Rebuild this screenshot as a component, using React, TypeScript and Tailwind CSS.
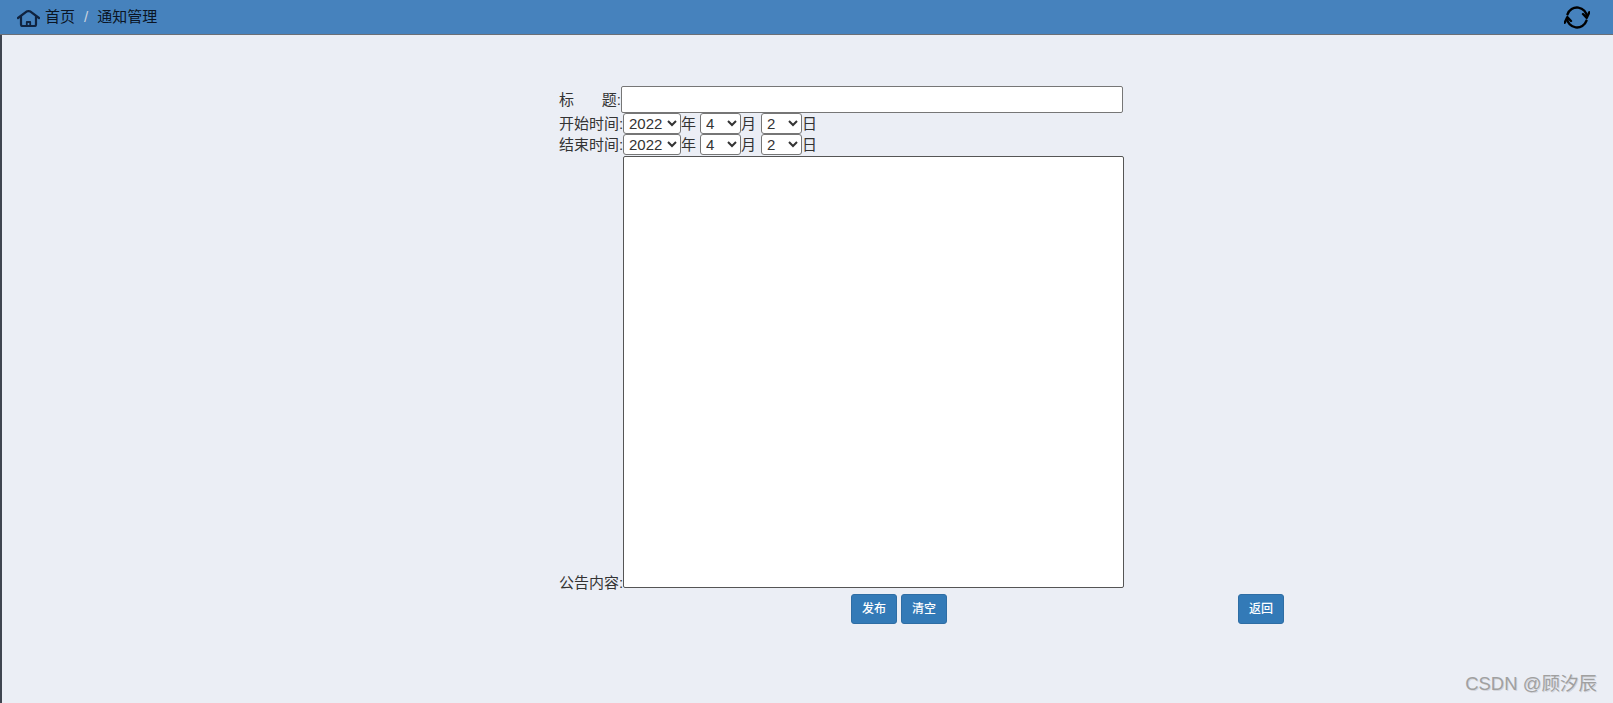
import React from "react";

const selectClass =
  "h-[21px] border border-[#767676] rounded-[3px] bg-white pl-px text-[15px] text-[#333] [font-family:'Liberation_Sans',sans-serif]";

const buttonClass =
  "h-[30px] w-[46px] rounded-[3px] border border-[#2e6da4] bg-[#337ab7] text-[12px] font-medium text-white";

const DateRow = ({ label }: { label: string }) => (
  <div className="flex h-[21px] items-center">
    <span className="w-[64px] whitespace-nowrap pt-px">{label}:</span>
    <select className={`${selectClass} w-[58px]`} defaultValue="2022">
      <option>2022</option>
    </select>
    <span className="w-[19px] pt-px">年</span>
    <select className={`${selectClass} w-[41px]`} defaultValue="4">
      <option>4</option>
    </select>
    <span className="w-[20px] pt-px">月</span>
    <select className={`${selectClass} w-[41px]`} defaultValue="2">
      <option>2</option>
    </select>
    <span className="pt-px">日</span>
  </div>
);

export default function App() {
  return (
    <div className="flex h-[703px] flex-col overflow-hidden bg-[#ebeef5] text-[15px] text-[#333] [font-family:'Liberation_Sans','Noto_Sans_CJK_SC',sans-serif]">
      <header className="flex h-[35px] shrink-0 items-center justify-between border-b border-[#6b6f76] bg-[#4682bd] pl-[17px] pr-[17px]">
        <nav className="flex items-center text-[15px] text-[#0b1524]">
          <svg
            className="mt-[3px]"
            width="23"
            height="17"
            viewBox="0 0 23 17"
            fill="none"
            stroke="#10233f"
            strokeWidth="2.2"
            strokeLinejoin="round"
            strokeLinecap="round"
          >
            <path d="M1 8 L9.5 1.6 Q11.5 0.6 13.5 1.6 L22 8" />
            <path d="M4 6.5 V14.5 Q4 16 5.5 16 H17.5 Q19 16 19 14.5 V6.5" />
            <path d="M9.8 15.5 V12 H13.2 V15.5" strokeWidth="1.8" />
          </svg>
          <span className="ml-[5px]">首页</span>
          <span className="ml-[9px] text-[#c9d3df]">/</span>
          <span className="ml-[9px]">通知管理</span>
        </nav>
        <svg
          className="mr-[6px] mt-[1px]"
          width="26"
          height="23"
          viewBox="0 0 26 23"
          fill="none"
          stroke="#000"
          strokeWidth="2.4"
          strokeLinecap="round"
          strokeLinejoin="round"
        >
          <path d="M3.5 8.4 A10 10 0 0 1 23 11" />
          <path d="M19 8 L22.7 11.8 L25.3 6.3" />
          <path d="M22.5 14.6 A10 10 0 0 1 3 12" />
          <path d="M0.7 16.7 L3.3 11.2 L7 15" />
        </svg>
      </header>

      <main className="flex flex-1 flex-col border-l-2 border-[#3f4550] pl-[557px] pt-[51px]">
        <div className="flex h-[27px] items-end">
          <span className="flex w-[62px] justify-between whitespace-nowrap pb-[2px]">
            <span>标</span>
            <span>题:</span>
          </span>
          <input
            type="text"
            className="h-[27px] w-[502px] rounded-[2px] border border-[#767676] bg-white"
          />
        </div>
        <div>
          <DateRow label="开始时间" />
          <DateRow label="结束时间" />
        </div>
        <div className="mt-px flex items-end">
          <span className="-mb-[6px] w-[64px] whitespace-nowrap">公告内容:</span>
          <textarea className="block h-[432px] w-[501px] resize-none rounded-[2px] border border-[#555] bg-white" />
        </div>
        <div className="mt-[6px] flex pl-[292px]">
          <button type="button" className={buttonClass}>
            发布
          </button>
          <button type="button" className={`${buttonClass} ml-1`}>
            清空
          </button>
          <button type="button" className={`${buttonClass} ml-[291px]`}>
            返回
          </button>
        </div>
      </main>

      <span className="absolute bottom-[5px] right-[16px] text-[18.5px] text-[#a0a0a0] [text-shadow:1px_1px_0_rgba(120,120,120,0.2)]">
        CSDN @顾汐辰
      </span>
    </div>
  );
}
